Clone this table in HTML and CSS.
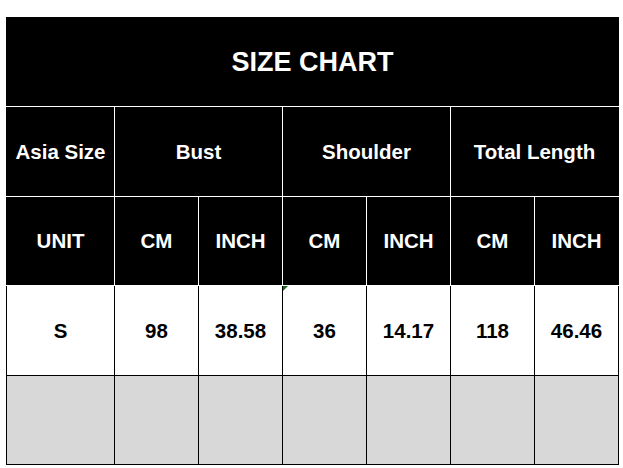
FILE: index.html
```html
<!DOCTYPE html>
<html>
<head>
<meta charset="utf-8">
<link rel="stylesheet" href="styles.css">
</head>
<body>
<table class="chart">
  <colgroup>
    <col class="c-first">
    <col class="c"><col class="c"><col class="c"><col class="c"><col class="c"><col class="c">
  </colgroup>
  <tr class="dark title-row">
    <td colspan="7" class="title">SIZE CHART</td>
  </tr>
  <tr class="dark tall">
    <td>Asia Size</td>
    <td colspan="2">Bust</td>
    <td colspan="2">Shoulder</td>
    <td colspan="2">Total Length</td>
  </tr>
  <tr class="dark">
    <td>UNIT</td>
    <td>CM</td><td>INCH</td>
    <td>CM</td><td>INCH</td>
    <td>CM</td><td>INCH</td>
  </tr>
  <tr class="light tall">
    <td>S</td>
    <td>98</td><td>38.58</td>
    <td class="noted">36</td><td>14.17</td>
    <td>118</td><td>46.46</td>
  </tr>
  <tr class="gray">
    <td></td><td></td><td></td><td></td><td></td><td></td><td></td>
  </tr>
</table>
</body>
</html>
```

FILE: styles.css
```css
html, body {
  margin: 0;
  padding: 0;
  background: #ffffff;
}

.chart {
  margin: 17px 0 0 6px;
  border-collapse: collapse;
  table-layout: fixed;
  width: 613px;
  font-family: "Liberation Sans", Arial, sans-serif;
  font-weight: bold;
  font-size: 20.5px;
  text-align: center;
}

.c-first { width: 108px; }
.c { width: 84px; }

.chart td {
  height: 88px;
  padding: 0;
  vertical-align: middle;
  border: 1px solid #000;
}

.chart .tall td { height: 89px; }

.dark td {
  background: #000;
  color: #fff;
  border-color: #fff;
}

.dark td:first-child { border-left-color: #000; }
.dark td:last-child { border-right-color: #000; }
.title-row td { border-top-color: #000; }

.chart .title {
  font-size: 27px;
}

.light td {
  background: #fff;
  color: #000;
  border-color: #000;
}

.gray td {
  background: #d8d8d8;
  border-color: #000;
}

.noted { position: relative; }
.noted::before {
  content: "";
  position: absolute;
  left: 0;
  top: 0;
  border-top: 5px solid #1e6b1e;
  border-right: 5px solid transparent;
}
```
